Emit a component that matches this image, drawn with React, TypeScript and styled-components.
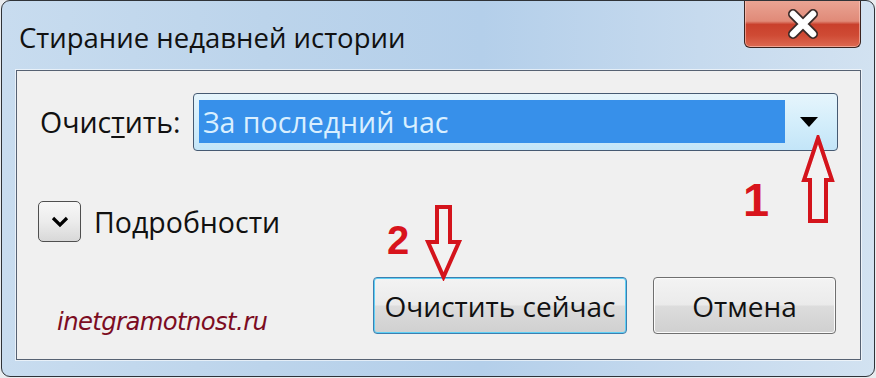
import styled, { createGlobalStyle } from 'styled-components';

const GlobalStyle = createGlobalStyle`
  html, body {
    margin: 0;
    padding: 0;
    background: #e9ecef;
  }
  body {
    font-family: 'Open Sans', 'Noto Sans', sans-serif;
  }
`;

const Window = styled.div`
  position: relative;
  box-sizing: border-box;
  width: 874px;
  height: 377px;
  margin-left: 1px;
  border: 1px solid #2f3338;
  border-radius: 9px;
  background: linear-gradient(
    to right,
    #c8dcef 0%,
    #bcd4eb 30%,
    #b4cfea 55%,
    #c6daee 80%,
    #d2e2f1 100%
  );
  display: flex;
  flex-direction: column;
  padding: 0 13px 0 14px;
  overflow: hidden;
`;

const TitleBar = styled.div`
  flex-shrink: 0;
  height: 69px;
  display: flex;
  align-items: flex-start;
  justify-content: space-between;
`;

const Title = styled.h1`
  margin: 18px 0 0 3px;
  font-size: 27.5px;
  font-weight: 400;
  color: #111;
`;

const CloseButton = styled.button`
  box-sizing: border-box;
  width: 117px;
  height: 48px;
  margin: -1px 0 0 0;
  border: 1px solid #3b2420;
  border-top: none;
  border-radius: 0 0 6px 6px;
  background: linear-gradient(
    to bottom,
    #eaa595 0%,
    #e08a78 45%,
    #c9402c 52%,
    #cf4a34 75%,
    #dd6a52 100%
  );
  box-shadow: inset 0 0 0 1px rgba(255, 210, 200, 0.55);
  display: flex;
  align-items: center;
  justify-content: center;
  padding: 0;
`;

const Client = styled.div`
  position: relative;
  flex: 1;
  min-height: 0;
  margin-bottom: 16px;
  border: 1px solid #566273;
  box-shadow: 0 0 0 1px rgba(255, 255, 255, 0.6);
  background: #f0f0f0;
  display: flex;
  flex-direction: column;
  padding: 22px 24px 0 23px;
`;

const Row = styled.div<{ $gap?: number }>`
  display: flex;
  align-items: center;
  margin-top: ${({ $gap }) => $gap ?? 0}px;
`;

const Label = styled.span`
  font-size: 28.5px;
  color: #111;
  width: 153px;
  flex-shrink: 0;
`;

const Accel = styled.span`
  text-decoration: underline;
  text-underline-offset: 3px;
  text-decoration-thickness: 2px;
`;

const Combo = styled.div`
  box-sizing: border-box;
  flex: 1;
  height: 58px;
  margin-right: -2px;
  border: 1px solid #465a72;
  border-radius: 4px;
  background: linear-gradient(to bottom, #e6f5fc 0%, #d4eefb 50%, #c3e5f8 100%);
  display: flex;
  align-items: stretch;
  padding: 6px 0 7px 5px;
`;

const Selection = styled.div`
  flex: 1;
  background: #3790ea;
  color: #d9efff;
  font-size: 28.5px;
  display: flex;
  align-items: center;
  padding-left: 4px;
`;

const DropArrow = styled.div`
  width: 48px;
  display: flex;
  align-items: center;
  justify-content: center;
  padding-right: 4px;
`;

const ExpandButton = styled.div`
  box-sizing: border-box;
  width: 43px;
  height: 41px;
  border: 1px solid #4f4f4f;
  border-radius: 5px;
  background: linear-gradient(to bottom, #f7f7f7 0%, #ececec 50%, #d8d8d8 100%);
  display: flex;
  align-items: center;
  justify-content: center;
  margin-left: -2px;
`;

const DetailsText = styled.span`
  font-size: 28.5px;
  color: #111;
  margin-left: 13px;
`;

const Watermark = styled.span`
  align-self: flex-end;
  font-family: 'DejaVu Sans', sans-serif;
  font-style: italic;
  font-size: 24.3px;
  line-height: 30px;
  color: #7c0c22;
  margin: 0 0 -3px 17px;
  letter-spacing: -0.6px;
`;

const Spacer = styled.div`
  flex: 1;
`;

const Button = styled.button<{ $primary?: boolean }>`
  box-sizing: border-box;
  height: 57px;
  width: ${({ $primary }) => ($primary ? 254 : 183)}px;
  margin-left: ${({ $primary }) => ($primary ? 0 : 26)}px;
  border: 1px solid ${({ $primary }) => ($primary ? '#3d7fb0' : '#6f6f6f')};
  border-radius: 4px;
  background: linear-gradient(
    to bottom,
    #f3f3f3 0%,
    #ebebeb 48%,
    #dcdcdc 52%,
    #d0d0d0 100%
  );
  box-shadow: ${({ $primary }) =>
    $primary ? 'inset 0 0 0 1px #5fd0f5' : 'inset 0 0 0 1px #fbfbfb'};
  font-family: 'Open Sans', 'Noto Sans', sans-serif;
  font-size: 28px;
  color: #111;
  padding: 0;
`;

const Annotation = styled.div<{ $left: number; $top: number }>`
  position: absolute;
  left: ${({ $left }) => $left}px;
  top: ${({ $top }) => $top}px;
  display: flex;
  align-items: flex-start;
`;

const Digit = styled.span<{ $size: number; $offset: number }>`
  font-family: 'Liberation Sans', Arial, sans-serif;
  font-weight: 700;
  font-size: ${({ $size }) => $size}px;
  line-height: 1;
  margin-top: ${({ $offset }) => $offset}px;
  color: #d8141c;
`;

const App = () => (
  <>
    <GlobalStyle />
    <Window>
      <TitleBar>
        <Title>Стирание недавней истории</Title>
        <CloseButton aria-label="Закрыть">
          <svg width="30" height="30" viewBox="0 0 30 30">
            <path d="M5 5 L25 25 M25 5 L5 25" stroke="#3a2a28" strokeWidth="10" strokeLinecap="round" />
            <path d="M5 5 L25 25 M25 5 L5 25" stroke="#ffffff" strokeWidth="6.5" strokeLinecap="round" />
          </svg>
        </CloseButton>
      </TitleBar>
      <Client>
        <Row>
          <Label>
            Очис<Accel>т</Accel>ить:
          </Label>
          <Combo>
            <Selection>За последний час</Selection>
            <DropArrow>
              <svg width="18" height="10" viewBox="0 0 18 10">
                <path d="M0 0 H18 L9 10 Z" fill="#000" />
              </svg>
            </DropArrow>
          </Combo>
        </Row>
        <Row $gap={50}>
          <ExpandButton>
            <svg width="18" height="12" viewBox="0 0 18 12">
              <path d="M2 2 L9 9 L16 2" stroke="#000" strokeWidth="3.2" fill="none" />
            </svg>
          </ExpandButton>
          <DetailsText>
            По<Accel>д</Accel>робности
          </DetailsText>
        </Row>
        <Row $gap={35}>
          <Watermark>inetgramotnost.ru</Watermark>
          <Spacer />
          <Button $primary>Очистить сейчас</Button>
          <Button>Отмена</Button>
        </Row>

        <Annotation $left={370} $top={134}>
          <Digit $size={40} $offset={15}>2</Digit>
          <svg width="40" height="76" viewBox="0 0 40 76" style={{ marginLeft: 15 }}>
            <path
              d="M13 2 H26 V37 H35 L19.5 72 L4 37 H13 Z"
              fill="#f2f2f2"
              stroke="#d4141c"
              strokeWidth="4"
              strokeLinejoin="miter"
            />
          </svg>
        </Annotation>

        <Annotation $left={726} $top={64}>
          <Digit $size={47} $offset={41}>1</Digit>
          <svg width="34" height="90" viewBox="0 0 34 90" style={{ marginLeft: 32 }}>
            <path
              d="M17 3 L31 45 H25 V86 H9 V45 H3 Z"
              fill="#f2f2f2"
              stroke="#d4141c"
              strokeWidth="4"
              strokeLinejoin="miter"
            />
          </svg>
        </Annotation>
      </Client>
    </Window>
  </>
);

export default App;
